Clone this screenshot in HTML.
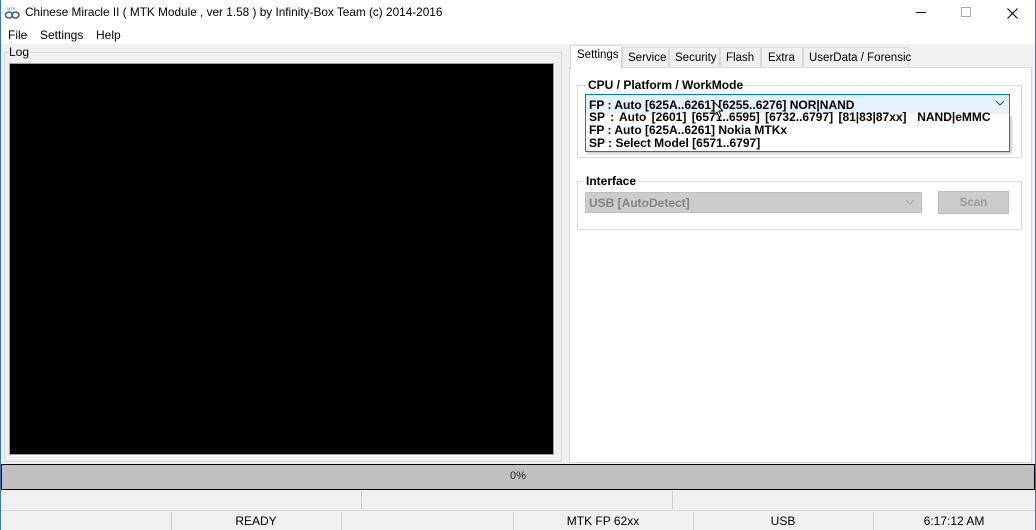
<!DOCTYPE html>
<html><head><style>
*{margin:0;padding:0;box-sizing:border-box}
body{width:1036px;height:530px;position:relative;overflow:hidden;background:#f0f0f0;font-family:"Liberation Sans",sans-serif;font-size:12px;color:#000}
.a{position:absolute;white-space:nowrap}
.b{font-weight:bold}
.t{font-size:11.5px}
</style></head><body>
<div class="a" style="left:0;top:0;width:1036px;height:44px;background:#fff"></div>
<div class="a" style="left:0;top:0;width:1px;height:530px;background:#2b79c8"></div>
<div class="a" style="left:1035px;top:0;width:1px;height:530px;background:#2b79c8"></div>
<svg class="a" style="left:4px;top:6px" width="16" height="14"><text x="3" y="4" font-size="4" fill="#3b6fb6">MTK</text><ellipse cx="5" cy="9" rx="3.5" ry="3" fill="none" stroke="#2f5fa8" stroke-width="1.5"/><ellipse cx="11.5" cy="9" rx="3.5" ry="3" fill="none" stroke="#2f5fa8" stroke-width="1.5"/></svg>
<div class="a" style="left:25px;top:5px;font-size:11.8px">Chinese Miracle II ( MTK Module , ver 1.58 ) by Infinity-Box Team (c) 2014-2016</div>
<div class="a" style="left:916px;top:12px;width:10px;height:1px;background:#000"></div>
<div class="a" style="left:961px;top:7px;width:10px;height:10px;border:1px solid #aaa"></div>
<svg class="a" style="left:1007px;top:8px" width="11" height="11"><path d="M0.5 0.5L10.5 10.5M10.5 0.5L0.5 10.5" stroke="#000" stroke-width="1.1"/></svg>
<div class="a" style="left:8px;top:28px">File</div>
<div class="a" style="left:40px;top:28px">Settings</div>
<div class="a" style="left:96px;top:28px">Help</div>

<div class="a" style="left:4px;top:52px;width:558px;height:410px;border:1px solid #dcdcdc"></div>
<div class="a" style="left:8px;top:45px;background:#f0f0f0;padding:0 1px">Log</div>
<div class="a" style="left:9px;top:63px;width:545px;height:392px;background:#000;border:1px solid #a0a0a0;box-shadow:1px 1px 0 #fff"></div>

<div class="a" style="left:569px;top:67px;width:463px;height:396px;background:#fff;border:1px solid #d9d9d9"></div>
<div class="a t" style="left:622px;top:47px;width:47px;height:21px;border:1px solid #d9d9d9;background:#f0f0f0;padding:4px 0 0 5px">Service</div>
<div class="a t" style="left:669px;top:47px;width:51px;height:21px;border:1px solid #d9d9d9;background:#f0f0f0;padding:4px 0 0 5px">Security</div>
<div class="a t" style="left:720px;top:47px;width:41px;height:21px;border:1px solid #d9d9d9;background:#f0f0f0;padding:4px 0 0 5px">Flash</div>
<div class="a t" style="left:761px;top:47px;width:42px;height:21px;border:1px solid #d9d9d9;background:#f0f0f0;padding:4px 0 0 6px">Extra</div>
<div class="a t" style="left:803px;top:47px;width:106px;height:21px;border:1px solid #d9d9d9;background:#f0f0f0;padding:4px 0 0 5px">UserData / Forensic</div>
<div class="a t" style="left:570px;top:45px;width:52px;height:24px;border:1px solid #d9d9d9;border-bottom:none;background:#fff;padding:3px 0 0 6px">Settings</div>

<div class="a" style="left:577px;top:85px;width:445px;height:73px;border:1px solid #dcdcdc"></div>
<div class="a b" style="left:586px;top:78px;background:#fff;padding:0 2px">CPU / Platform / WorkMode</div>
<div class="a b" style="left:585px;top:94px;width:425px;height:21px;background:#e5f1fb;border:1px solid #0078d7;padding:3px 0 0 3px;font-size:12px">FP : Auto [625A..6261] [6255..6276] NOR|NAND</div>
<svg class="a" style="left:995px;top:100px" width="10" height="6"><path d="M1 1L5 5L9 1" fill="none" stroke="#444"/></svg>
<div class="a b" style="left:585px;top:114px;width:425px;height:38px;background:#fff;border:1px solid #646464;border-top:none;box-shadow:2px 2px 2px rgba(0,0,0,.2);font-size:12px;line-height:13px;padding:0 0 0 3px">
<div style="margin-top:-3px;word-spacing:2px">SP : Auto [2601] [6571..6595] [6732..6797] [81|83|87xx]&nbsp; NAND|eMMC</div>
<div>FP : Auto [625A..6261] Nokia MTKx</div>
<div>SP : Select Model [6571..6797]</div></div>
<svg class="a" style="left:713px;top:101px" width="10" height="18"><path d="M1 1L1 14L4 11L6 16L8 15L6 10L10 10Z" fill="#fff" stroke="#000" stroke-width="1"/></svg>

<div class="a" style="left:577px;top:181px;width:445px;height:49px;border:1px solid #dcdcdc"></div>
<div class="a b" style="left:584px;top:174px;background:#fff;padding:0 2px">Interface</div>
<div class="a b" style="left:585px;top:192px;width:337px;height:21px;background:#ccc;border:1px solid #c0c0c0;padding:3px 0 0 3px;color:#838383;font-size:12px">USB [AutoDetect]</div>
<svg class="a" style="left:905px;top:199px" width="10" height="6"><path d="M1 1L5 5L9 1" fill="none" stroke="#aaa"/></svg>
<div class="a b" style="left:938px;top:191px;width:71px;height:23px;background:#ccc;border:1px solid #bfbfbf;text-align:center;padding-top:5px;color:#9a9a9a;font-size:11.5px">Scan</div>

<div class="a" style="left:1px;top:464px;width:1034px;height:26px;background:#c0c0c0;border:1px solid #000;text-align:center;padding-top:5px;font-size:11px;color:#222">0%</div>
<div class="a" style="left:361px;top:491px;width:1px;height:18px;background:#ccc"></div>
<div class="a" style="left:672px;top:491px;width:1px;height:18px;background:#ccc"></div>
<div class="a" style="left:1px;top:510px;width:1034px;height:1px;background:#d7d7d7"></div>
<div class="a" style="left:171px;top:512px;width:1px;height:18px;background:#ccc"></div>
<div class="a" style="left:341px;top:512px;width:1px;height:18px;background:#ccc"></div>
<div class="a" style="left:513px;top:512px;width:1px;height:18px;background:#ccc"></div>
<div class="a" style="left:693px;top:512px;width:1px;height:18px;background:#ccc"></div>
<div class="a" style="left:873px;top:512px;width:1px;height:18px;background:#ccc"></div>
<div class="a" style="left:171px;top:514px;width:170px;text-align:center">READY</div>
<div class="a" style="left:513px;top:514px;width:180px;text-align:center">MTK FP 62xx</div>
<div class="a" style="left:693px;top:514px;width:180px;text-align:center">USB</div>
<div class="a" style="left:873px;top:514px;width:162px;text-align:center">6:17:12 AM</div>
</body></html>
